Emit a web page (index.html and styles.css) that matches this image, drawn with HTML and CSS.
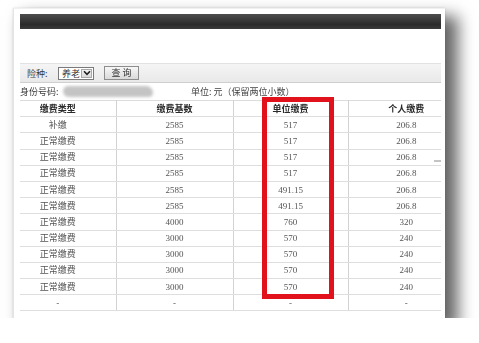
FILE: index.html
```html
<!DOCTYPE html>
<html lang="zh-CN">
<head>
<meta charset="utf-8">
<title>缴费明细</title>
<link rel="stylesheet" href="styles.css">
</head>
<body>
<div class="paper">
  <div class="sheet">
    <div class="topbar"></div>
    <div class="toolbar">
      <span class="label">险种:</span>
      <span class="select"><span class="select-text">养老</span><span class="select-btn"><svg width="8" height="6" viewBox="0 0 8 6"><path d="M1 1.2 L4 4.3 L7 1.2" fill="none" stroke="#222" stroke-width="1.6"/></svg></span></span>
      <span class="button">查 询</span>
    </div>
    <div class="info">
      <span class="idlabel">身份号码:</span>
      <span class="redact"></span>
      <span class="unit">单位: 元（保留两位小数）</span>
    </div>
    <table class="grid">
      <colgroup><col class="c1"><col class="c2"><col class="c3"><col class="c4"></colgroup>
      <thead>
        <tr><th>缴费类型</th><th>缴费基数</th><th>单位缴费</th><th class="last">个人缴费</th></tr>
      </thead>
      <tbody>
        <tr><td>补缴</td><td>2585</td><td>517</td><td class="last">206.8</td></tr>
        <tr><td>正常缴费</td><td>2585</td><td>517</td><td class="last">206.8</td></tr>
        <tr><td>正常缴费</td><td>2585</td><td>517</td><td class="last">206.8</td></tr>
        <tr><td>正常缴费</td><td>2585</td><td>517</td><td class="last">206.8</td></tr>
        <tr><td>正常缴费</td><td>2585</td><td>491.15</td><td class="last">206.8</td></tr>
        <tr><td>正常缴费</td><td>2585</td><td>491.15</td><td class="last">206.8</td></tr>
        <tr><td>正常缴费</td><td>4000</td><td>760</td><td class="last">320</td></tr>
        <tr><td>正常缴费</td><td>3000</td><td>570</td><td class="last">240</td></tr>
        <tr><td>正常缴费</td><td>3000</td><td>570</td><td class="last">240</td></tr>
        <tr><td>正常缴费</td><td>3000</td><td>570</td><td class="last">240</td></tr>
        <tr><td>正常缴费</td><td>3000</td><td>570</td><td class="last">240</td></tr>
        <tr><td>-</td><td>-</td><td>-</td><td class="last">-</td></tr>
      </tbody>
    </table>
  </div>
  <div class="highlight"></div>
  <div class="tick"></div>
</div>
</body>
</html>
```
FILE: styles.css
```css
html, body {
  margin: 0;
  padding: 0;
  background: #ffffff;
}
body {
  font-family: "Noto Sans CJK SC", "Liberation Sans", sans-serif;
  font-size: 9px;
  color: #444;
}
.paper {
  position: relative;
  margin: 8px 0 0 13px;
  width: 432px;
  height: 310px;
  box-sizing: border-box;
  padding: 5px 5px 0 6px;
  background: #ffffff;
  border-left: 1px solid #e4e4e4;
  border-top: 1px solid #f0f0f0;
  box-shadow: 11px 10px 15px 2px rgba(0, 0, 0, 0.6), 0 0 2px rgba(0, 0, 0, 0.12);
}
.sheet {
  width: 421px;
  overflow: hidden;
  filter: blur(0.35px);
}
.topbar {
  height: 15px;
  background: linear-gradient(#4d4d4d, #2b2b2b 70%, #3a3a3a);
  margin-bottom: 34px;
}
.toolbar {
  height: 18px;
  display: flex;
  align-items: center;
  padding-left: 7px;
  background: linear-gradient(#f5f5f5, #e9e9e9);
  border-top: 1px solid #e2e2e2;
  border-bottom: 1px solid #cfcfcf;
  color: #333333;
}
.label {
  width: 31px;
  color: #3a3a3a;
}
.select {
  display: flex;
  align-items: center;
  height: 11px;
  width: 34px;
  border: 1px solid #7a7a7a;
  background: #fff;
  margin-right: 10px;
}
.select-text {
  flex: 1;
  padding-left: 3px;
  line-height: 11px;
  color: #333;
}
.select-btn {
  width: 11px;
  height: 9px;
  margin-right: 1px;
  display: flex;
  align-items: center;
  justify-content: center;
  background: linear-gradient(#f4f4f4, #d8d8d8);
  border: 1px solid #a8a8a8;
  box-sizing: border-box;
}
.button {
  width: 35px;
  height: 14px;
  box-sizing: border-box;
  border: 1px solid #8d8d8d;
  background: linear-gradient(#f7f7f7, #dadada);
  text-align: center;
  line-height: 12px;
  color: #333;
}
.info {
  height: 17px;
  display: flex;
  align-items: center;
  color: #444;
}
.idlabel {
  width: 43px;
  color: #3a3a3a;
}
.redact {
  width: 90px;
  height: 11px;
  border-radius: 6px 8px 5px 7px;
  background: #c4c4c4;
  filter: blur(1.5px);
  margin-right: 38px;
}
.grid {
  margin-left: -20px;
  width: 464px;
  border-collapse: collapse;
  table-layout: fixed;
  border-top: 1px solid #dcdcdc;
}
.c1 { width: 116px; }
.c2 { width: 117px; }
.c3 { width: 115px; }
.c4 { width: 116px; }
.grid th,
.grid td {
  height: 15.2px;
  padding: 0;
  text-align: center;
  border-bottom: 1px solid #dedede;
  border-right: 1px solid #d2d2d2;
  line-height: 12px;
}
.grid th {
  font-weight: 700;
  color: #2a2a2a;
}
.grid td {
  font-family: "Liberation Serif", "Noto Sans CJK SC", serif;
  color: #555;
}
.grid td:first-child {
  font-family: "Noto Sans CJK SC", "Liberation Sans", sans-serif;
}
.grid .last {
  border-right: none;
}
.highlight {
  position: absolute;
  left: 248px;
  top: 88px;
  width: 62px;
  height: 192px;
  border: 5px solid #e2121c;
}
.tick {
  position: absolute;
  left: 420px;
  top: 151px;
  width: 7px;
  height: 2px;
  background: #c4c4c4;
}
```
